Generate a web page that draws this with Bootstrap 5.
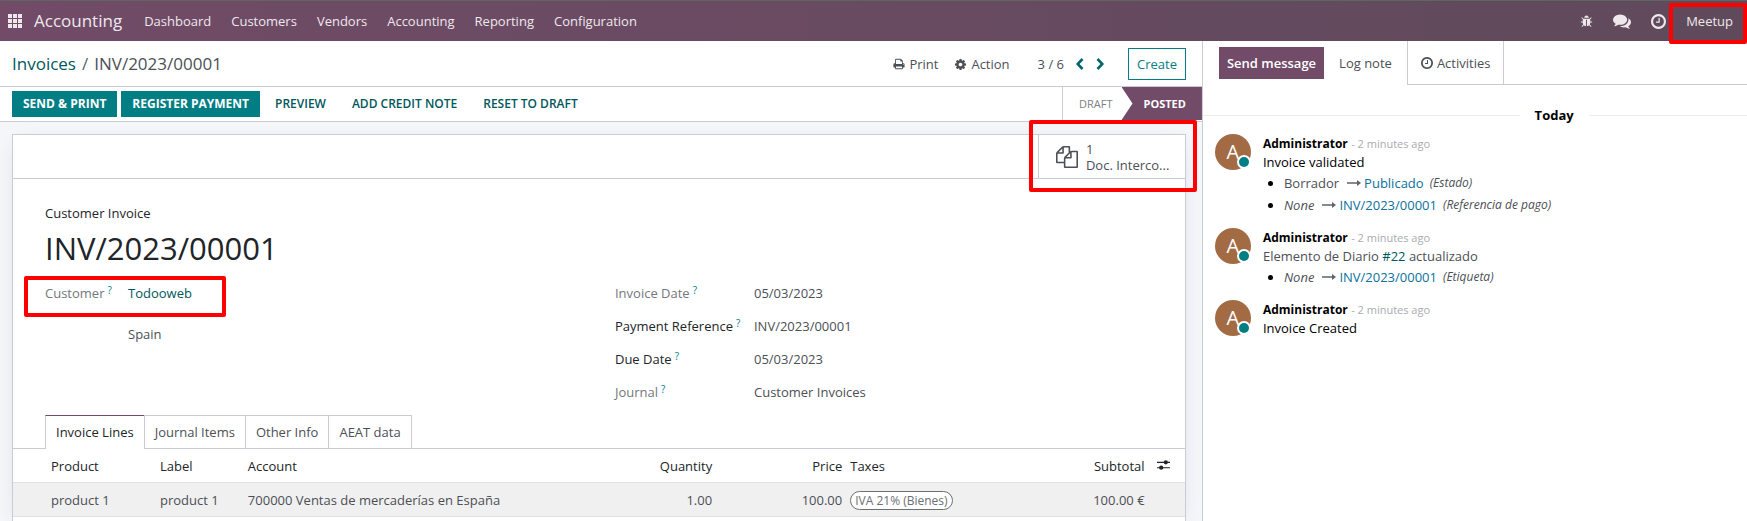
<!DOCTYPE html>
<html lang="en">
<head>
<meta charset="utf-8">
<meta name="viewport" content="width=device-width, initial-scale=1">
<title>INV/2023/00001 - Accounting</title>
<link href="https://cdn.jsdelivr.net/npm/bootstrap@5.3.0/dist/css/bootstrap.min.css" rel="stylesheet">
<style>
  :root { --line: #c9ccd2; --brand: #714b67; --teal: #017e84; --teal-dark: #01585c; --body: #4c4f56; --ink: #212529; }
  body { font-family: "Open Sans", "Noto Sans", sans-serif; font-size: 13px; line-height: 20px; color: var(--body); background: #fff; overflow: hidden; }
  a { text-decoration: none; color: var(--teal-dark); }
  svg { display: block; fill: currentColor; flex: none; }
  .btn { --bs-btn-font-size: 13px; --bs-btn-line-height: 20px; --bs-btn-border-radius: 0; }

  .topbar { height: 41px; border-top: 1px solid #5f655f; background: linear-gradient(90deg, #714b67, #5f4a5b); color: #eee8ec; }
  .topbar a, .topbar button { color: inherit; }
  .topbar .nav-link { padding: 10px; font-size: 13px; line-height: 20px; }
  .app-name { font-size: 17px; line-height: 24px; }
  .plain { background: none; border: 0; padding: 0; color: inherit; }
  .user-menu { padding: 0 14px 0 16px; margin-left: 4px; }

  .workspace { height: calc(100vh - 41px); }
  .main-pane { min-width: 0; }
  .chatter { flex: 0 0 31.2%; border-left: 1px solid var(--line); color: #000; }

  .crumbs { height: 46px; border-bottom: 1px solid var(--line); padding: 1px 16px 0 12px; }
  .crumb-trail { font-size: 17px; line-height: 24px; }
  .crumb-trail .breadcrumb-item + .breadcrumb-item { padding-left: 6px; color: var(--body); }
  .crumb-trail .breadcrumb-item + .breadcrumb-item::before { padding-right: 6px; }
  .chevron { color: #01666b; }
  .btn-create { --bs-btn-color: var(--teal); --bs-btn-border-color: var(--teal); --bs-btn-padding-y: 5px; --bs-btn-padding-x: 8px; }

  .statusbar { height: 35px; border-bottom: 1px solid var(--line); padding-left: 12px; }
  .statusbar .btn { --bs-btn-padding-y: 2px; --bs-btn-padding-x: 10px; --bs-btn-font-size: 12px; --bs-btn-color: var(--teal-dark); text-transform: uppercase; white-space: nowrap; }
  .statusbar .btn-flat { --bs-btn-font-weight: 600; }
  .statusbar .btn-teal { --bs-btn-bg: var(--teal); --bs-btn-border-color: var(--teal); --bs-btn-color: #fff; --bs-btn-font-weight: 700; }
  .stages { border-left: 1px solid var(--line); font-size: 11px; }
  .stage-idle { padding: 0 9px 0 16px; color: #7d8187; }
  .stage-now { padding: 0 16px 0 22px; color: #fff; background: var(--brand); font-weight: 700; margin-bottom: 1px; clip-path: polygon(0 0, 100% 0, 100% 100%, 0 100%, 11px 50%); }

  .canvas { background: #f5f6fa; padding: 12px 16px 0 12px; min-height: 0; }
  .sheet { background: #fff; border: 1px solid var(--line); border-bottom: 0; box-shadow: 0 5px 20px -8px rgba(60, 60, 90, .2); height: 100%; }
  .button-box { height: 44px; border-bottom: 1px solid var(--line); }
  .stat-btn { width: 147px; border-left: 1px solid var(--line); padding: 0 17px; line-height: 16px; color: var(--body); }

  .record { padding: 24px 32px 0; }
  .record .kind { color: var(--ink); }
  .record h1 { font-size: 31px; line-height: 40px; font-weight: 500; color: var(--ink); margin: 5px 0 15px; }
  .record .row { --bs-gutter-x: 32px; }
  .field { min-height: 33px; }
  .field dt { font-weight: 500; color: #74777c; flex: none; }
  .field dt.strong-label { color: var(--ink); }
  .field dt sup { font-size: 10px; color: var(--teal); margin-left: 3px; top: -4px; font-weight: 400; }
  .field dd { margin: 0; }
  .fields-left dt { width: 83px; }
  .fields-right dt { width: 139px; }

  .sheet-tabs { padding: 0 32px; border-bottom: 1px solid var(--line); }
  .sheet-tabs .nav-link { padding: 6px 10px; line-height: 20px; color: var(--body); border: 1px solid var(--line); border-bottom: 0; border-radius: 0; margin: 0 0 0 -1px; }
  .sheet-tabs li:first-child .nav-link { margin-left: 0; }
  .sheet-tabs .nav-link.active { color: var(--ink); border-color: var(--line); border-top-color: var(--brand); margin-bottom: -1px; padding-bottom: 7px; background: #fff; }

  .lines { table-layout: fixed; color: var(--body); margin: 0; }
  .lines > thead > tr > th, .lines > tbody > tr > td { padding: 7px 4px 6px; border-bottom: 1px solid #dee0e4; white-space: nowrap; line-height: 20px; color: var(--body); background: transparent; }
  .lines > thead > tr > th { font-weight: 500; color: var(--ink); }
  .lines > tbody > tr { background: #f0f0f0; }
  .lines tr > :first-child { padding-left: 38px !important; }
  .tax { display: inline-block; border: 1px solid #6c6f74; border-radius: 10px; padding: 0 4px; font-size: 12px; line-height: 17px; background: #fff; color: #6c6f74; }

  .chatter-top { height: 44px; }
  .chatter-top .btn { --bs-btn-padding-y: 5px; white-space: nowrap; }
  .btn-send { --bs-btn-bg: var(--brand); --bs-btn-border-color: var(--brand); --bs-btn-color: #fff; --bs-btn-font-weight: 600; --bs-btn-padding-x: 7px; margin: 6px 0 6px 16px; }
  .btn-note { --bs-btn-color: var(--body); --bs-btn-padding-x: 14px; }
  .chatter-rest { border-left: 1px solid var(--line); border-bottom: 1px solid var(--line); }
  .activities { color: var(--body); padding: 0 13px; border-right: 1px solid var(--line); }
  .day { gap: 15px; margin: 20px 0 9px; font-weight: 700; }
  .day::before, .day::after { content: ""; flex: 2 1 0; height: 1px; background: #eceef0; }
  .day::after { flex-grow: 1; }
  .post { padding-left: 12px; gap: 12px; margin-bottom: 12px; }
  .post p { margin: 0; line-height: 19px; }
  .post ul { margin: 0; padding-left: 21px; line-height: 22px; }
  .post .author { font-size: 12px; font-weight: 700; }
  .post .stamp { color: #a9abae; font-size: 11px; }
  .post .dim { color: var(--body); }
  .avatar { width: 36px; height: 36px; border-radius: 50%; background: #a36b43; color: #fff; font-size: 20px; line-height: 36px; }
  .presence { width: 10px; height: 10px; right: 2px; bottom: 3px; border-radius: 50%; background: var(--teal); box-shadow: 0 0 0 2px #fff; }
  .change { gap: 3px; color: var(--body); }
  .change b { font-weight: 500; color: #0a719b; }
  .change .to { margin-left: 5px; color: #5f636a; }
  .change .what { margin-left: 3px; font-size: 12px; }

  .marker { position: absolute; border: 4px solid #f00; border-radius: 2px; pointer-events: none; z-index: 5; }
  .marker-user { inset: 2px 0 -3px -1px; }
  .marker-stat { inset: -15px -12px -14px -9px; }
  .marker-customer { inset: -7px auto -1px -21px; width: 202px; height: 41px; }
</style>
</head>
<body>
<svg class="d-none" xmlns="http://www.w3.org/2000/svg">
  <symbol id="i-clock" viewBox="0 128 1536 1536"><path d="M896 544v448q0 14-9 23t-23 9h-320q-14 0-23-9t-9-23v-64q0-14 9-23t23-9h224v-352q0-14 9-23t23-9h64q14 0 23 9t9 23zm416 352q0-148-73-273t-198-198-273-73-273 73-198 198-73 273 73 273 198 198 273 73 273-73 198-198 73-273zm224 0q0 209-103 385.500t-279.500 279.500-385.500 103-385.500-103-279.500-279.500-103-385.500 103-385.500 279.500-279.500 385.500-103 385.500 103 279.500 279.500 103 385.500z"/></symbol>
  <symbol id="i-arrow" viewBox="0 0 14 8"><path d="M0 3.300h10V1l4 3-4 3V4.700H0z"/></symbol>
</svg>

<header class="topbar d-flex align-items-center">
  <a href="#" aria-label="Apps" class="ms-2"><svg width="14" height="14" viewBox="0 0 14 14"><path d="M0 0h4v4H0zM5 0h4v4H5zM10 0h4v4h-4zM0 5h4v4H0zM5 5h4v4H5zM10 5h4v4h-4zM0 10h4v4H0zM5 10h4v4H5zM10 10h4v4h-4z"/></svg></a>
  <a href="#" class="app-name ms-2 ps-1 me-2 pe-1">Accounting</a>
  <nav class="nav flex-nowrap">
    <a class="nav-link" href="#">Dashboard</a>
    <a class="nav-link" href="#">Customers</a>
    <a class="nav-link" href="#">Vendors</a>
    <a class="nav-link" href="#">Accounting</a>
    <a class="nav-link" href="#">Reporting</a>
    <a class="nav-link" href="#">Configuration</a>
  </nav>
  <div class="ms-auto d-flex align-items-center align-self-stretch">
    <button class="plain" aria-label="Debug"><svg width="13" height="13" viewBox="0 0 1792 1792"><path d="M1696 960q0 26-19 45t-45 19h-224q0 171-67 290l208 209q19 19 19 45t-19 45q-18 19-45 19t-45-19l-198-197q-5 5-15 13t-42 28.500-65 36.500-82 29-97 13v-896h-128v896q-51 0-101.500-13.500t-87-33-66-39-43.500-32.500l-15-14-183 207q-20 21-48 21-24 0-43-16-19-18-20.500-44.500t15.500-46.500l202-227q-58-114-58-274h-224q-26 0-45-19t-19-45 19-45 45-19h224v-294l-173-173q-19-19-19-45t19-45 45-19 45 19l173 173h844l173-173q19-19 45-19t45 19 19 45-19 45l-173 173v294h224q26 0 45 19t19 45zm-480-576h-640q0-133 93.500-226.500t226.500-93.500 226.500 93.500 93.500 226.500z"/></svg></button>
    <button class="plain mx-3 px-1" aria-label="Messages"><svg width="18" height="18" viewBox="0 0 1792 1792"><path d="M1408 768q0 139-94 257t-256.500 186.500-353.500 68.500q-86 0-176-16-124 88-278 128-36 9-86 16h-3q-11 0-20.500-8t-11.500-21q-1-3-1-6.500t.5-6.500 2-6l2.500-5 3.500-5.500 4-5 4.500-5 4-4.500q5-6 23-25t26-29.500 22.500-29 25-38.500 20.500-44q-124-72-195-177t-71-224q0-139 94-257t256.500-186.500 353.500-68.500 353.500 68.500 256.500 186.500 94 257zm384 256q0 120-71 224.500t-195 176.500q10 24 20.500 44t25 38.500 22.500 29 26 29.500 23 25q1 1 4 4.500t4.500 5 4 5 3.500 5.500l2.500 5 2 6 .5 6.500-1 6.500q-3 14-13 22t-22 7q-50-7-86-16-154-40-278-128-90 16-176 16-271 0-472-132 58 4 88 4 161 0 309-45t264-129q125-92 192-212t67-254q0-77-23-152 129 71 204 178t75 230z"/></svg></button>
    <button class="plain" aria-label="Activities"><svg width="15" height="15"><use href="#i-clock"/></svg></button>
    <div class="user-menu position-relative align-self-stretch d-flex align-items-center">
      <a href="#">Meetup</a>
      <span class="marker marker-user"></span>
    </div>
  </div>
</header>

<div class="workspace d-flex">
  <main class="main-pane flex-grow-1 d-flex flex-column">
    <div class="crumbs d-flex align-items-center">
      <ol class="crumb-trail breadcrumb m-0 flex-nowrap">
        <li class="breadcrumb-item"><a href="#">Invoices</a></li>
        <li class="breadcrumb-item">INV/2023/00001</li>
      </ol>
      <button class="plain d-flex align-items-center gap-1 ms-auto me-3"><svg width="12" height="12" viewBox="0 0 1792 1792"><path d="M448 1536h896v-256h-896v256zm0-640h896v-384h-160q-40 0-68-28t-28-68v-160h-640v640zm1152 64q0-26-19-45t-45-19-45 19-19 45 19 45 45 19 45-19 19-45zm128 0v416q0 13-9.500 22.500t-22.500 9.500h-224v160q0 40-28 68t-68 28h-960q-40 0-68-28t-28-68v-160h-224q-13 0-22.500-9.500t-9.500-22.500v-416q0-79 56.500-135.500t135.500-56.500h64v-544q0-40 28-68t68-28h672q40 0 88 20t76 48l152 152q28 28 48 76t20 88v256h64q79 0 135.500 56.500t56.500 135.500z"/></svg>Print</button>
      <button class="plain d-flex align-items-center gap-1 me-4 pe-1"><svg width="13" height="13" viewBox="0 0 1792 1792"><path d="M1152 896q0-106-75-181t-181-75-181 75-75 181 75 181 181 75 181-75 75-181zm512-109v222q0 12-8 23t-20 13l-185 28q-19 54-39 91 35 50 107 138 10 12 10 25t-9 23q-27 37-99 108t-94 71q-12 0-26-9l-138-108q-44 23-91 38-16 136-29 186-7 28-36 28h-222q-14 0-24.500-8.500t-11.500-21.500l-28-184q-49-16-90-37l-141 107q-10 9-25 9-14 0-25-11-126-114-165-168-7-10-7-23 0-12 8-23 15-21 51-66.500t54-70.500q-27-50-41-99l-183-27q-13-2-21-12.500t-8-23.500v-222q0-12 8-23t19-13l186-28q14-46 39-92-40-57-107-138-10-12-10-24 0-10 9-23 26-36 98.500-107.500t94.500-71.500q13 0 26 10l138 107q44-23 91-38 16-136 29-186 7-28 36-28h222q14 0 24.500 8.500t11.500 21.500l28 184q49 16 90 37l142-107q9-9 24-9 13 0 25 10 129 119 165 170 7 8 7 22 0 12-8 23-15 21-51 66.500t-54 70.500q26 50 41 98l183 28q13 2 21 12.500t8 23.500z"/></svg>Action</button>
      <span>3 / 6</span>
      <button class="plain chevron ms-2 ps-1" aria-label="Previous"><svg width="8" height="12" viewBox="0 0 8 12"><path d="M6.500 1L1.700 6l4.800 5" fill="none" stroke="currentColor" stroke-width="2.600"/></svg></button>
      <button class="plain chevron ms-2 ps-1 me-4" aria-label="Next"><svg width="8" height="12" viewBox="0 0 8 12"><path d="M1.500 1l4.800 5-4.800 5" fill="none" stroke="currentColor" stroke-width="2.600"/></svg></button>
      <button class="btn btn-create">Create</button>
    </div>

    <div class="statusbar d-flex">
      <div class="d-flex align-items-center gap-1">
        <button class="btn btn-teal">Send &amp; Print</button>
        <button class="btn btn-teal">Register Payment</button>
        <button class="btn btn-flat">Preview</button>
        <button class="btn btn-flat">Add Credit Note</button>
        <button class="btn btn-flat">Reset to Draft</button>
      </div>
      <div class="stages d-flex ms-auto">
        <span class="stage-idle d-flex align-items-center">DRAFT</span>
        <span class="stage-now d-flex align-items-center">POSTED</span>
      </div>
    </div>

    <div class="canvas flex-grow-1">
      <div class="sheet">
        <div class="button-box d-flex justify-content-end">
          <div class="position-relative d-flex border-0">
            <div class="stat-btn d-flex">
              <button class="plain d-flex align-items-center text-start gap-2">
                <svg width="22" height="22" viewBox="0 0 1792 1792"><path d="M1696 384q40 0 68 28t28 68v1216q0 40-28 68t-68 28h-960q-40 0-68-28t-28-68v-288h-544q-40 0-68-28t-28-68v-672q0-40 20-88t48-76l408-408q28-28 76-48t88-20h416q40 0 68 28t28 68v328q68-40 128-40h416zm-544 213l-299 299h299v-299zm-640-384l-299 299h299v-299zm196 647l316-316v-416h-384v416q0 40-28 68t-68 28h-416v640h512v-256q0-40 20-88t48-76zm956 804v-1152h-384v416q0 40-28 68t-68 28h-416v640h896z"/></svg>
                <span class="text-nowrap">1<br>Doc. Interco...</span>
              </button>
            </div>
            <span class="marker marker-stat"></span>
          </div>
        </div>

        <div class="record">
          <div class="kind">Customer Invoice</div>
          <h1>INV/2023/00001</h1>
          <div class="row">
            <dl class="col-6 fields-left mb-0">
              <div class="field d-flex position-relative mb-2">
                <dt>Customer<sup>?</sup></dt><dd><a href="#">Todooweb</a></dd>
                <span class="marker marker-customer"></span>
              </div>
              <div class="field d-flex"><dt></dt><dd>Spain</dd></div>
            </dl>
            <dl class="col-6 fields-right mb-0">
              <div class="field d-flex"><dt>Invoice Date<sup>?</sup></dt><dd>05/03/2023</dd></div>
              <div class="field d-flex"><dt class="strong-label">Payment Reference<sup>?</sup></dt><dd>INV/2023/00001</dd></div>
              <div class="field d-flex"><dt class="strong-label">Due Date<sup>?</sup></dt><dd>05/03/2023</dd></div>
              <div class="field d-flex"><dt>Journal<sup>?</sup></dt><dd>Customer Invoices</dd></div>
            </dl>
          </div>
        </div>

        <ul class="nav nav-tabs sheet-tabs flex-nowrap">
          <li class="nav-item"><a class="nav-link active" href="#">Invoice Lines</a></li>
          <li class="nav-item"><a class="nav-link" href="#">Journal Items</a></li>
          <li class="nav-item"><a class="nav-link" href="#">Other Info</a></li>
          <li class="nav-item"><a class="nav-link" href="#">AEAT data</a></li>
        </ul>
        <table class="table lines">
          <colgroup><col style="width:12.2%"><col style="width:7.5%"><col style="width:30.4%"><col style="width:9.9%"><col style="width:11.1%"><col style="width:15.3%"><col style="width:10.5%"><col></colgroup>
          <thead><tr><th>Product</th><th>Label</th><th>Account</th><th class="text-end">Quantity</th><th class="text-end">Price</th><th>Taxes</th><th class="text-end">Subtotal</th>
            <th><button class="plain ms-1" aria-label="Columns"><svg width="13" height="12" viewBox="0 0 14 12"><path d="M0 2.500h8v1.300H0zM11 2.500h3v1.300h-3zM0 8.300h3v1.300H0zM6 8.300h8v1.300H6z"/><circle cx="9.500" cy="3.100" r="2.300"/><circle cx="4.500" cy="8.900" r="2.300"/></svg></button></th></tr></thead>
          <tbody><tr><td>product 1</td><td>product 1</td><td>700000 Ventas de mercaderías en España</td><td class="text-end">1.00</td><td class="text-end">100.00</td><td><span class="tax">IVA 21% (Bienes)</span></td><td class="text-end">100.00 €</td><td></td></tr></tbody>
        </table>
      </div>
    </div>
  </main>

  <aside class="chatter">
    <div class="chatter-top d-flex">
      <button class="btn btn-send">Send message</button>
      <button class="btn btn-note">Log note</button>
      <div class="chatter-rest flex-grow-1 d-flex">
        <button class="plain activities d-flex align-items-center gap-1"><svg width="12" height="12"><use href="#i-clock"/></svg>Activities</button>
      </div>
    </div>
    <div class="day d-flex align-items-center">Today</div>

    <article class="post d-flex">
      <div class="avatar position-relative text-center flex-shrink-0">A<span class="presence position-absolute"></span></div>
      <div>
        <p><span class="author">Administrator</span> <span class="stamp">- 2 minutes ago</span></p>
        <p>Invoice validated</p>
        <ul>
          <li><span class="change d-flex align-items-center">Borrador<svg class="to" width="14" height="8"><use href="#i-arrow"/></svg><b>Publicado</b><i class="what">(Estado)</i></span></li>
          <li><span class="change d-flex align-items-center"><i>None</i><svg class="to" width="14" height="8"><use href="#i-arrow"/></svg><b>INV/2023/00001</b><i class="what">(Referencia de pago)</i></span></li>
        </ul>
      </div>
    </article>
    <article class="post d-flex">
      <div class="avatar position-relative text-center flex-shrink-0">A<span class="presence position-absolute"></span></div>
      <div>
        <p><span class="author">Administrator</span> <span class="stamp">- 2 minutes ago</span></p>
        <p class="dim">Elemento de Diario <a href="#">#22</a> actualizado</p>
        <ul>
          <li><span class="change d-flex align-items-center"><i>None</i><svg class="to" width="14" height="8"><use href="#i-arrow"/></svg><b>INV/2023/00001</b><i class="what">(Etiqueta)</i></span></li>
        </ul>
      </div>
    </article>
    <article class="post d-flex">
      <div class="avatar position-relative text-center flex-shrink-0">A<span class="presence position-absolute"></span></div>
      <div>
        <p><span class="author">Administrator</span> <span class="stamp">- 2 minutes ago</span></p>
        <p>Invoice Created</p>
      </div>
    </article>
  </aside>
</div>
<script src="https://cdn.jsdelivr.net/npm/bootstrap@5.3.0/dist/js/bootstrap.bundle.min.js"></script>
</body>
</html>
